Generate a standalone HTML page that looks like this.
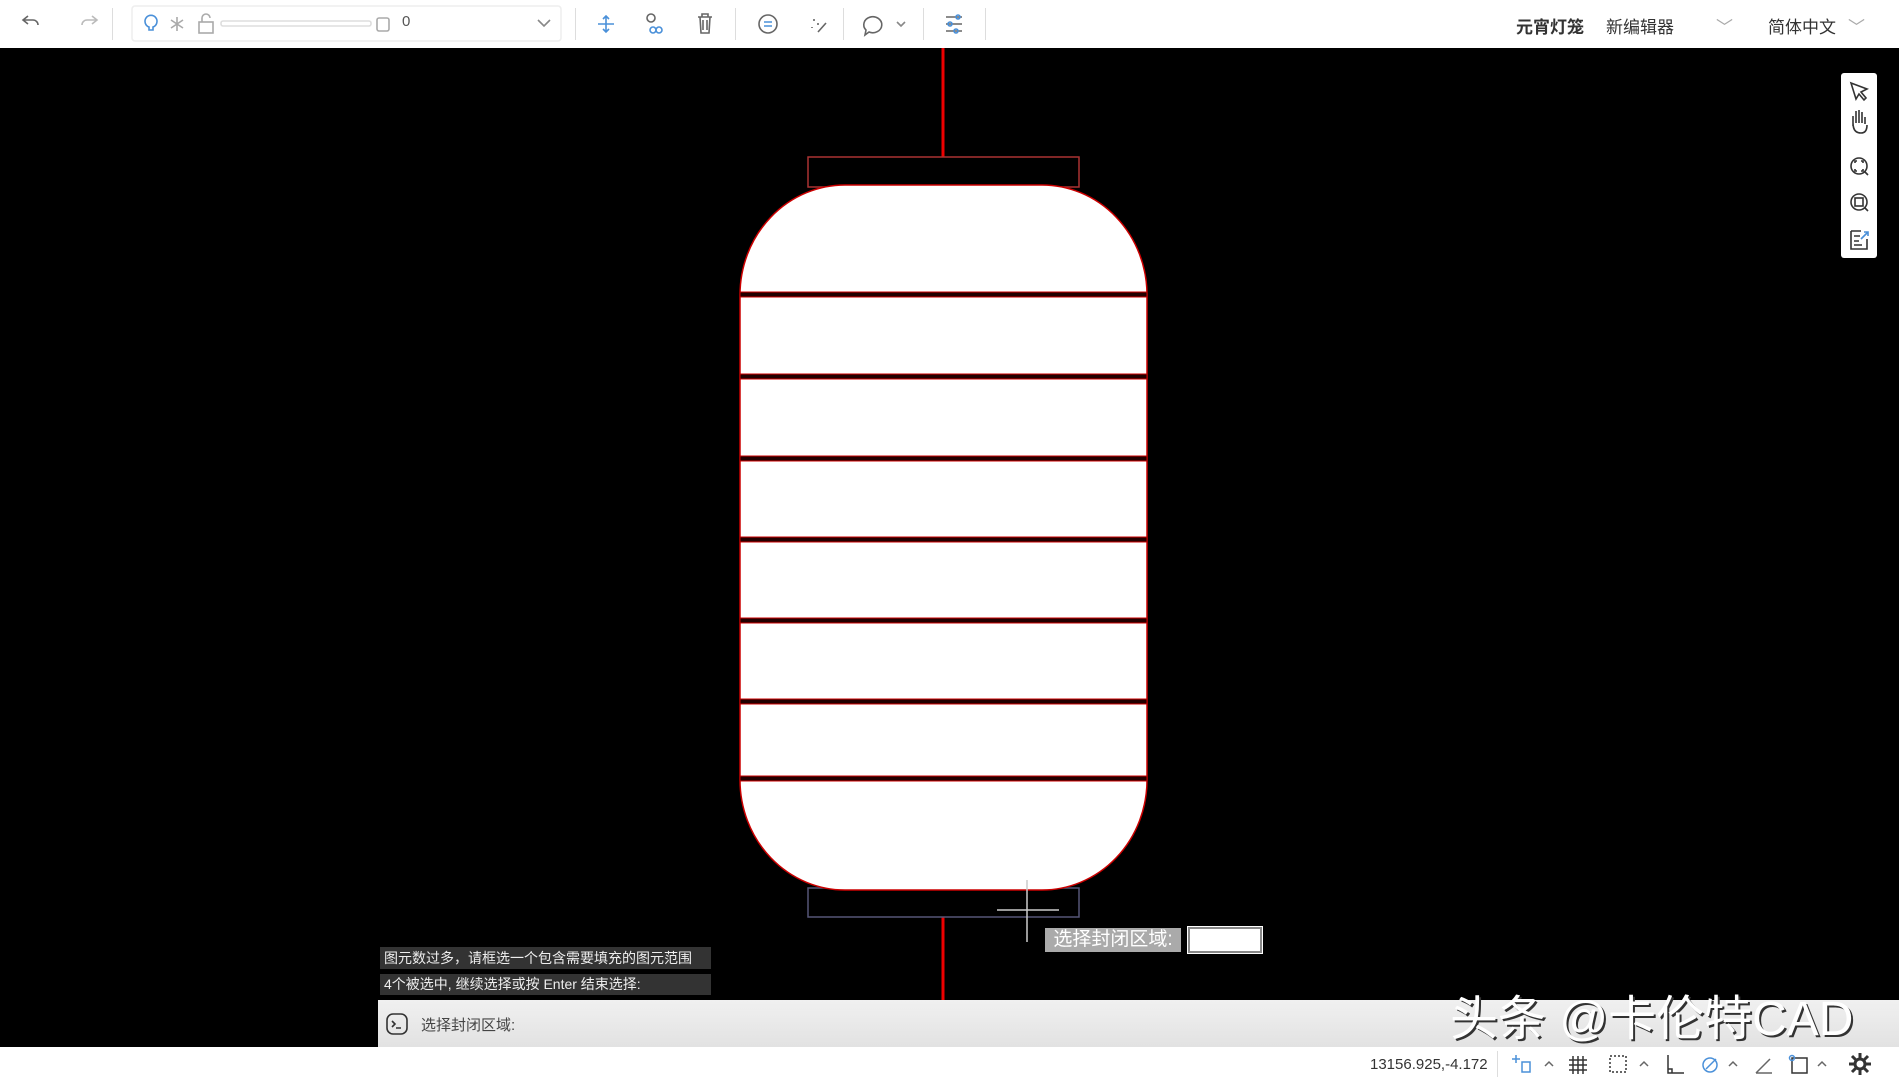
<!DOCTYPE html>
<html><head><meta charset="utf-8"><style>
body{margin:0;width:1899px;height:1080px;overflow:hidden;background:#000;font-family:"Liberation Sans","Noto Sans CJK SC",sans-serif;position:relative}
.top{position:absolute;left:0;top:0;width:1899px;height:48px;background:#fff}
.bot{position:absolute;left:0;top:1047px;width:1899px;height:33px;background:#fff}
.a{position:absolute}
.sep{position:absolute;top:8px;width:1px;height:32px;background:#ddd}
.t{position:absolute;top:13px;font-size:17px;color:#333}
</style></head><body>
<div class="top">
<svg class="a" style="left:0;top:0" width="1000" height="48" fill="none" stroke-width="1.6">
<path d="M28 24 l-5 -4 5 -4 M23 20 h10 a5 5 0 0 1 5 5" stroke="#666"/>
<path d="M92 24 l5 -4 -5 -4 M97 20 h-10 a5 5 0 0 0 -5 5" stroke="#bbb"/>
<rect x="132" y="6" width="429" height="35" rx="3" stroke="#eee" fill="#fff"/>
<path d="M149 30 v-3 a6 6 0 1 1 4 0 v3 z" stroke="#4a90d9"/>
<path d="M177 17 v14 M171 20 l12 8 M171 28 l12 -8" stroke="#aaa"/>
<rect x="199" y="22" width="14" height="11" stroke="#aaa"/><path d="M202 22 v-4 a4 4 0 0 1 8 0" stroke="#aaa"/>
<rect x="221" y="21" width="150" height="5" rx="2" stroke="#ddd"/>
<rect x="377" y="18" width="12" height="13" rx="2" stroke="#aaa"/>
<path d="M538 20 l6 6 6 -6" stroke="#888"/>
<path d="M606 16 v16 M598 24 h16 M603 19 l3 -3 3 3 M603 29 l3 3 3 -3" stroke="#4a90d9"/>
<circle cx="651" cy="18" r="4" stroke="#666"/><circle cx="653" cy="30" r="3" stroke="#4a90d9"/><circle cx="659" cy="30" r="3" stroke="#4a90d9"/>
<path d="M698 17 h14 M702 17 v-3 h6 v3 M700 17 l1 16 h8 l1 -16 M703 20 v10 M707 20 v10" stroke="#666"/>
<circle cx="768" cy="24" r="9" stroke="#666"/><path d="M764 22h8M764 26h8" stroke="#4a90d9"/>
<path d="M814 19 v2 M818 23 v2 M812 27 v1 M818 32 l8 -9" stroke="#666"/>
<path d="M866 30 a9 8 0 1 1 3 2 l-4 3 z" stroke="#666"/><path d="M897 22 l4 4 4 -4" stroke="#888"/>
<path d="M946 17 h16 M946 24 h16 M946 31 h16" stroke="#666"/><circle cx="958" cy="17" r="2" stroke="#4a90d9"/><circle cx="950" cy="24" r="2" stroke="#4a90d9"/><circle cx="956" cy="31" r="2" stroke="#4a90d9"/>
</svg>
<div class="sep" style="left:112px"></div><div class="sep" style="left:575px"></div><div class="sep" style="left:735px"></div><div class="sep" style="left:843px"></div><div class="sep" style="left:923px"></div><div class="sep" style="left:985px"></div>
<div class="t" style="left:402px;color:#555;font-size:15px">0</div>
<div class="t" style="left:1516px;font-weight:bold">元宵灯笼</div>
<div class="t" style="left:1606px">新编辑器</div>
<div class="t" style="left:1716px;color:#aaa">﹀</div>
<div class="t" style="left:1768px">简体中文</div>
<div class="t" style="left:1848px;color:#aaa">﹀</div>
</div>

<svg class="a" style="left:0;top:48px" width="1899" height="999">
<g transform="translate(0,-48)">
<line x1="943" y1="48" x2="943" y2="157" stroke="#e00" stroke-width="3"/>
<line x1="943" y1="917" x2="943" y2="1003" stroke="#e00" stroke-width="3"/>
<rect x="808" y="157" width="271" height="30" fill="none" stroke="#a33" stroke-width="1.5"/>
<rect x="808" y="888" width="271" height="29" fill="none" stroke="#557" stroke-width="1.5"/>
<rect x="740" y="185" width="407" height="705" rx="105" ry="110" fill="#fff" stroke="#c00" stroke-width="1.5"/>
<g fill="#200" stroke="#c00" stroke-width="1">
<rect x="740" y="292" width="407" height="5"/><rect x="740" y="374" width="407" height="5"/><rect x="740" y="456" width="407" height="5"/><rect x="740" y="537" width="407" height="5"/><rect x="740" y="618" width="407" height="5"/><rect x="740" y="699" width="407" height="5"/><rect x="740" y="776" width="407" height="5"/>
</g>
<path d="M1027 880 v62 M997 910 h62" stroke="#ccc" stroke-width="1.5"/>
</g></svg>

<div class="a" style="left:1045px;top:928px;width:136px;height:24px;background:#aaa;color:#fff;font-size:19px;line-height:24px;text-align:center">选择封闭区域:</div>
<div class="a" style="left:1188px;top:927px;width:70px;height:22px;background:#fff;border:2px solid #888;outline:1px solid #fff"></div>
<div class="a" style="left:380px;top:947px;width:327px;height:22px;background:#333;color:#eee;font-size:14px;line-height:22px;padding-left:4px">图元数过多，请框选一个包含需要填充的图元范围</div>
<div class="a" style="left:380px;top:974px;width:327px;height:21px;background:#333;color:#eee;font-size:14px;line-height:21px;padding-left:4px">4个被选中, 继续选择或按 Enter 结束选择:</div>
<div class="a" style="left:378px;top:1000px;width:1521px;height:47px;background:linear-gradient(#f0f0f0,#e2e2e2)"></div>
<svg class="a" style="left:385px;top:1012px" width="26" height="26" fill="none" stroke="#333" stroke-width="1.6"><rect x="2" y="2" width="20" height="20" rx="6"/><path d="M7 9 l3 3 -3 3 M11 16 h5"/></svg>
<div class="a" style="left:421px;top:1014px;font-size:15px;color:#444">选择封闭区域:</div>
<div class="a" style="left:1450px;top:992px;font-size:48px;color:#fff;line-height:56px;text-shadow:2px 2px 0 #333">头条 @卡伦特CAD</div>

<div class="a" style="left:1841px;top:73px;width:36px;height:185px;background:#fff;border-radius:3px"></div>
<svg class="a" style="left:1841px;top:73px" width="36" height="185" fill="none" stroke="#333" stroke-width="1.6">
<path d="M10 10 l16 6 -6 3 5 6 -2 2 -5 -6 -3 5 z"/>
<path d="M12 53 v-10 M15 50 v-12 M18 50 v-13 M21 50 v-11 M24 51 v-7 M12 50 q0 10 8 10 q6 0 6 -8"/>
<circle cx="18" cy="93" r="8"/><path d="M24 99 l3 3 M14 90 v-2 h2 M22 90 v-2 h-2 M14 96 v2 h2 M22 96 v2 h-2"/>
<circle cx="18" cy="129" r="8"/><rect x="14" y="125" width="8" height="8"/><path d="M24 135 l3 3"/>
<path d="M10 158 v18 h16 v-10 M10 158 h10 M13 163 h6 M13 168 h5 M13 172 h8"/><path d="M20 166 l7 -7 M23 159 h4 v4" stroke="#4a90d9"/>
</svg>

<div class="bot">
<div class="a" style="left:1370px;top:9px;font-size:15px;color:#333">13156.925,-4.172</div>
<div class="a" style="left:1497px;top:4px;width:1px;height:26px;background:#ddd"></div>
<svg class="a" style="left:1500px;top:0" width="399" height="33" fill="none" stroke-width="1.5">
<path d="M16 8 v8 M12 12 h8" stroke="#4a90d9"/><rect x="22" y="15" width="8" height="10" stroke="#4a90d9"/>
<path d="M45 19 l4 -4 4 4" stroke="#666"/>
<path d="M73 9v18M78 9v18M83 9v18M69 13h18M69 18h18M69 23h18" stroke="#333"/>
<rect x="110" y="9" width="16" height="16" stroke="#333" stroke-dasharray="2 2"/>
<path d="M140 19 l4 -4 4 4" stroke="#666"/>
<path d="M168 8 v18 h16 M168 22 h4 v4" stroke="#333"/>
<circle cx="210" cy="18" r="7" stroke="#4a90d9"/><path d="M206 22 l10 -10" stroke="#4a90d9"/><path d="M229 19 l4 -4 4 4" stroke="#666"/>
<path d="M256 26 l14 -14 M256 26 h16" stroke="#666"/>
<rect x="292" y="11" width="15" height="15" stroke="#333"/><circle cx="292" cy="11" r="2.5" stroke="#4a90d9"/><path d="M318 19 l4 -4 4 4" stroke="#666"/>
<circle cx="360" cy="17" r="5" stroke="#333" stroke-width="3"/><path d="M360 6v5M360 23v5M349 17h5M366 17h5M352 9l4 4M364 21l4 4M352 25l4-4M364 13l4-4" stroke="#333" stroke-width="3"/>
</svg>
</div>
</body></html>
